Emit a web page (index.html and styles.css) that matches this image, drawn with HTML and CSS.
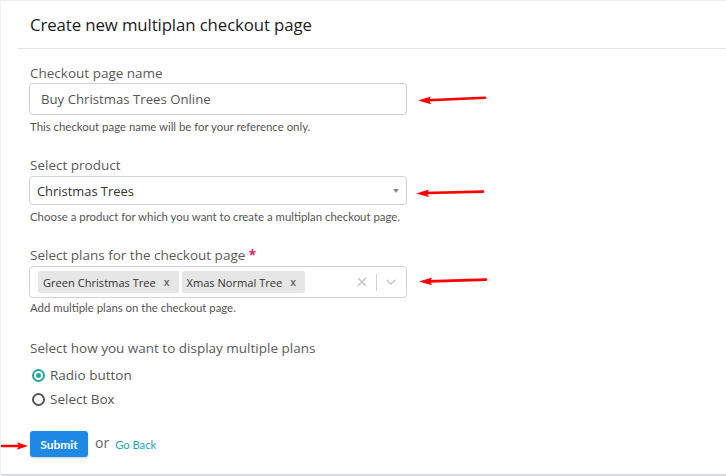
FILE: index.html
```html
<!DOCTYPE html>
<html>
<head>
<meta charset="utf-8">
<link rel="stylesheet" href="styles.css">
</head>
<body>
<div class="card">
  <header class="head"><h1 class="title">Create new multiplan checkout page</h1></header>
  <form class="form">
    <div class="field f1">
      <label class="label">Checkout page name</label>
      <div class="input">Buy Christmas Trees Online</div>
      <p class="help">This checkout page name will be for your reference only.</p>
    </div>
    <div class="field f2">
      <label class="label">Select product</label>
      <div class="select"><span>Christmas Trees</span><span class="caret"></span></div>
      <p class="help">Choose a product for which you want to create a multiplan checkout page.</p>
    </div>
    <div class="field f3">
      <label class="label">Select plans for the checkout page <span class="req">*</span></label>
      <div class="multi">
        <div class="tags">
          <span class="tag">Green Christmas Tree <span class="tx">x</span></span>
          <span class="tag">Xmas Normal Tree <span class="tx">x</span></span>
        </div>
        <div class="indicators">
          <svg class="clear" width="10" height="10" viewBox="0 0 10 10"><path d="M1 1L9 9M9 1L1 9" stroke="#c8c8c8" stroke-width="1.6"/></svg>
          <span class="sep"></span>
          <svg class="chev" width="12" height="8" viewBox="0 0 12 8"><path d="M1.5 1.8L6 6L10.5 1.8" fill="none" stroke="#c8c8c8" stroke-width="1.3"/></svg>
        </div>
      </div>
      <p class="help h3">Add multiple plans on the checkout page.</p>
    </div>
    <div class="group">
      <div class="label">Select how you want to display multiple plans</div>
      <div class="radio"><span class="dot on"></span>Radio button</div>
      <div class="radio"><span class="dot"></span>Select Box</div>
    </div>
    <div class="actions">
      <button type="button" class="btn">Submit</button>
      <span class="or">or</span>
      <a class="back">Go Back</a>
    </div>
  </form>
  <svg class="arrow a1" width="70" height="10" viewBox="0 0 70 10"><path d="M10 5.2L67 2.8" stroke="#f00" stroke-width="2.6" stroke-linecap="round"/><polygon points="0,5.6 13,1.5 11,5.3 13,9.2" fill="#f00"/></svg>
  <svg class="arrow a2" width="70" height="10" viewBox="0 0 70 10"><path d="M10 5L67 3.6" stroke="#f00" stroke-width="2.6" stroke-linecap="round"/><polygon points="0,5.4 13,1.4 11,5.2 13,9" fill="#f00"/></svg>
  <svg class="arrow a3" width="70" height="10" viewBox="0 0 70 10"><path d="M10 5.4L67 3.6" stroke="#f00" stroke-width="2.6" stroke-linecap="round"/><polygon points="0,5.6 13,1.5 11,5.4 13,9.2" fill="#f00"/></svg>
  <svg class="arrow a4" width="28" height="10" viewBox="0 0 28 10"><path d="M1 5L18 5" stroke="#f00" stroke-width="2.6" stroke-linecap="round"/><polygon points="27,5 16,1.2 18,5 16,8.8" fill="#f00"/></svg>
</div>
</body>
</html>
```
FILE: styles.css
```css
* { box-sizing: border-box; }
html, body { margin: 0; padding: 0; background: #fff; }
body { font-family: "Open Sans", "Liberation Sans", sans-serif; color: #555; }

.card {
  position: relative;
  height: 476px;
  border-top: 1px solid #ececec;
  border-bottom: 2px solid #d9dbde;
  border-left: 1px solid #f0f0f0;
  border-radius: 0 0 0 3px;
  background: #fff;
}

.head {
  height: 48px;
  margin-left: 17px;
  border-bottom: 1px solid #e3e3e3;
  display: flex;
  align-items: center;
}
.title {
  margin: 0 0 0 12px;
  font-size: 16.8px;
  font-weight: 400;
  color: #1c1c1c;
  letter-spacing: -0.1px;
}

.form { padding-left: 28px; width: 406px; }

.label {
  display: block;
  font-size: 13.5px;
  line-height: 18px;
  color: #5a5a5a;
  padding-left: 1px;
}
.req { color: #e0245e; font-weight: 700; }

.f1 { margin-top: 15px; }
.f2 { margin-top: 22px; }
.f3 { margin-top: 22px; }

.input {
  margin-top: 1px;
  height: 32px;
  border: 1px solid #cfcfcf;
  border-radius: 4px;
  padding-left: 11px;
  display: flex;
  align-items: center;
  font-size: 13.2px;
  color: #555;
}

.help {
  margin: 5px 0 0 1px;
  font-family: "Lato", "Open Sans", sans-serif;
  font-size: 11.4px;
  line-height: 14px;
  color: #555;
}
.help.h3 { margin-top: 3px; }

.select {
  margin-top: 2px;
  height: 29px;
  border: 1px solid #d2d2d2;
  border-radius: 4px;
  padding: 0 7px 0 7px;
  display: flex;
  align-items: center;
  justify-content: space-between;
  font-size: 12.9px;
  color: #333;
}
.caret {
  width: 0; height: 0;
  border-left: 3.5px solid transparent;
  border-right: 3.5px solid transparent;
  border-top: 4px solid #888;
  margin-top: 1px;
}

.multi {
  margin-top: 2px;
  height: 32px;
  border: 1px solid #d2d2d2;
  border-radius: 4px;
  display: flex;
  align-items: center;
  justify-content: space-between;
  padding: 0 9px 0 8px;
}
.tags { display: flex; gap: 3px; }
.tag {
  background: #e6e6e6;
  border-radius: 2px;
  height: 22px;
  padding: 0 9px 0 5px;
  display: flex;
  align-items: center;
  font-size: 11.1px;
  color: #333;
  white-space: pre;
}
.tx { color: #666; font-size: 10.5px; margin-left: 5px; font-weight: 600; }

.indicators { display: flex; align-items: center; }
.clear { display: block; margin-right: 9px; }
.sep { width: 1px; height: 17px; background: #d0d0d0; margin-right: 8px; }
.chev { display: block; }

.group { margin-top: 24px; }
.group .label { margin-bottom: 6px; }
.radio {
  display: flex;
  align-items: center;
  height: 24px;
  font-size: 13.5px;
  color: #555;
  padding-left: 3px;
}
.dot {
  width: 13px; height: 13px;
  border: 2px solid #555;
  border-radius: 50%;
  margin-right: 5px;
  position: relative;
}
.dot.on { border-color: #26a69a; }
.dot.on::after {
  content: "";
  position: absolute;
  left: 2px; top: 2px;
  width: 5px; height: 5px;
  border-radius: 50%;
  background: #26a69a;
}

.actions {
  margin-top: 20px;
  display: flex;
  align-items: center;
  padding-left: 1px;
}
.btn {
  width: 58px;
  height: 26px;
  border: 0;
  border-radius: 3px;
  background: #1e88e5;
  color: #fff;
  font-family: "Lato", "Open Sans", sans-serif;
  font-weight: 700;
  font-size: 12px;
  box-shadow: 0 1px 2px rgba(0,0,0,0.2);
  padding: 0;
}
.or { margin-left: 7px; font-size: 14px; color: #666; margin-top: -3px; }
.back { margin-left: 6px; font-family: "Lato", "Open Sans", sans-serif; font-size: 11.2px; color: #17a7b8; }

.arrow { position: absolute; display: block; }
.a1 { left: 417px; top: 94px; }
.a2 { left: 415px; top: 187px; }
.a3 { left: 418px; top: 275px; }
.a4 { left: 0px; top: 440px; }
```
